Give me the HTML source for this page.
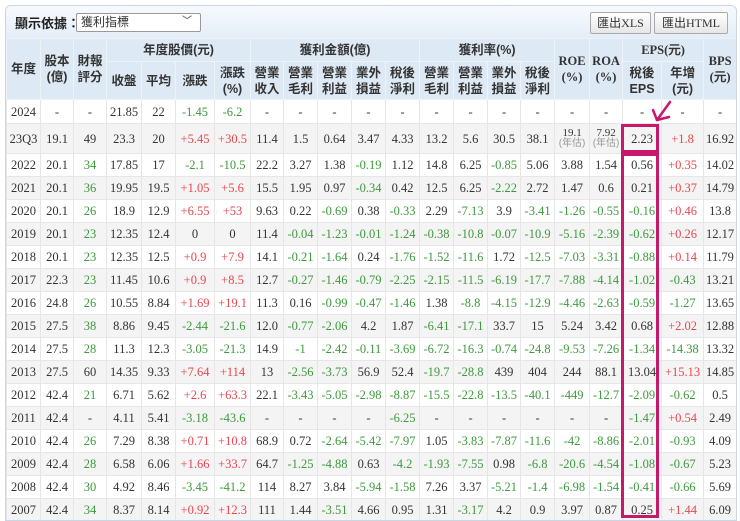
<!DOCTYPE html>
<html><head><meta charset="utf-8">
<style>
*{box-sizing:border-box;margin:0;padding:0}
body{width:740px;height:521px;background:#fff;overflow:hidden;position:relative;font-family:"Liberation Serif","Noto Serif CJK SC",serif;}
#wrap{position:absolute;left:5px;top:5px;width:732px;height:516px;border:1px solid #c9d6e3;border-radius:6px 6px 0 0;overflow:hidden}
#bar{position:absolute;left:0;top:0;width:730px;height:32px;background:linear-gradient(#f7fafd,#e4eef8);font-family:"Liberation Sans","Noto Sans CJK TC",sans-serif}
#lbl{position:absolute;left:9px;top:7px;font-size:13px;font-weight:bold;color:#222}
#sel{position:absolute;left:70px;top:7px;width:125px;height:19px;border:1px solid #999;background:#fff;border-radius:2px;font-size:12px;color:#333;padding-left:4px;line-height:17px}
#sel span{position:absolute;right:8px;top:-1px;font-size:10px}
.btn{position:absolute;top:6px;height:22px;border:1px solid #aaa;background:linear-gradient(#fff,#e6e6e6);border-radius:2px;font-size:12px;line-height:20px;text-align:center;color:#333;font-family:"Liberation Serif","Noto Sans CJK TC",serif}
table{position:absolute;left:0;top:32px;border-collapse:collapse;table-layout:fixed;width:731px}
th{background:#dde9f4;font-family:"Liberation Sans","Noto Sans CJK TC",sans-serif;font-size:12.5px;font-weight:bold;color:#333;border:1px solid #eef3f8;line-height:16px;text-align:center;padding:0}
th.e{font-family:"Liberation Serif",serif;font-weight:bold}
td{text-align:center;font-size:12.5px;line-height:12px;color:#333;border:1px solid #e6e6e6;height:23px;padding:0;white-space:nowrap;overflow:hidden}
tr{height:23px}
tr:nth-child(even) td{background:#f4f4f4}
tr.a td{background:#fff}
.g{color:#3c9a3c}.r{color:#e8464e}
.s{font-size:11px;line-height:10px}
.s i{font-style:normal;color:#999;font-size:10px;font-family:"Liberation Sans","Noto Sans CJK TC",sans-serif}
</style></head><body>
<div id="wrap">
<div id="bar"><div id="lbl">顯示依據：</div><div id="sel">獲利指標<span>﹀</span></div>
<div class="btn" style="left:584px;width:61px">匯出XLS</div><div class="btn" style="left:648px;width:74px">匯出HTML</div></div>
<table>
<colgroup><col style="width:34px"><col style="width:33px"><col style="width:33px"><col style="width:35px"><col style="width:34px"><col style="width:39px"><col style="width:36px"><col style="width:33px"><col style="width:34px"><col style="width:34px"><col style="width:34px"><col style="width:34px"><col style="width:34px"><col style="width:34px"><col style="width:33px"><col style="width:34px"><col style="width:35px"><col style="width:33px"><col style="width:39px"><col style="width:42px"><col style="width:33px"></colgroup>
<tr style="height:23px"><th rowspan="2">年度</th><th rowspan="2">股本<br>(億)</th><th rowspan="2">財報<br>評分</th><th colspan="4">年度股價(元)</th><th colspan="5">獲利金額(億)</th><th colspan="4">獲利率(%)</th><th rowspan="2" class="e">ROE<br>(%)</th><th rowspan="2" class="e">ROA<br>(%)</th><th colspan="2" class="e">EPS(元)</th><th rowspan="2" class="e">BPS<br>(元)</th></tr>
<tr style="height:38px"><th>收盤</th><th>平均</th><th>漲跌</th><th>漲跌<br>(%)</th><th>營業<br>收入</th><th>營業<br>毛利</th><th>營業<br>利益</th><th>業外<br>損益</th><th>稅後<br>淨利</th><th>營業<br>毛利</th><th>營業<br>利益</th><th>業外<br>損益</th><th>稅後<br>淨利</th><th>稅後<br>EPS</th><th>年增<br>(元)</th></tr>
<tr class="a" style="height:24px"><td style="height:24px">2024</td><td>-</td><td>-</td><td>21.85</td><td>22</td><td class="g">-1.45</td><td class="g">-6.2</td><td>-</td><td>-</td><td>-</td><td>-</td><td>-</td><td>-</td><td>-</td><td>-</td><td>-</td><td>-</td><td>-</td><td>-</td><td>-</td><td>-</td></tr>
<tr style="height:30px"><td style="height:30px">23Q3</td><td>19.1</td><td>49</td><td>23.3</td><td>20</td><td class="r">+5.45</td><td class="r">+30.5</td><td>11.4</td><td>1.5</td><td>0.64</td><td>3.47</td><td>4.33</td><td>13.2</td><td>5.6</td><td>30.5</td><td>38.1</td><td class="s">19.1<br><i>(年估)</i></td><td class="s">7.92<br><i>(年估)</i></td><td>2.23</td><td class="r">+1.8</td><td>16.92</td></tr>
<tr class="a"><td>2022</td><td>20.1</td><td class="g">34</td><td>17.85</td><td>17</td><td class="g">-2.1</td><td class="g">-10.5</td><td>22.2</td><td>3.27</td><td>1.38</td><td class="g">-0.19</td><td>1.12</td><td>14.8</td><td>6.25</td><td class="g">-0.85</td><td>5.06</td><td>3.88</td><td>1.54</td><td>0.56</td><td class="r">+0.35</td><td>14.02</td></tr>
<tr><td>2021</td><td>20.1</td><td class="g">36</td><td>19.95</td><td>19.5</td><td class="r">+1.05</td><td class="r">+5.6</td><td>15.5</td><td>1.95</td><td>0.97</td><td class="g">-0.34</td><td>0.42</td><td>12.5</td><td>6.25</td><td class="g">-2.22</td><td>2.72</td><td>1.47</td><td>0.6</td><td>0.21</td><td class="r">+0.37</td><td>14.79</td></tr>
<tr class="a"><td>2020</td><td>20.1</td><td class="g">26</td><td>18.9</td><td>12.9</td><td class="r">+6.55</td><td class="r">+53</td><td>9.63</td><td>0.22</td><td class="g">-0.69</td><td>0.38</td><td class="g">-0.33</td><td>2.29</td><td class="g">-7.13</td><td>3.9</td><td class="g">-3.41</td><td class="g">-1.26</td><td class="g">-0.55</td><td class="g">-0.16</td><td class="r">+0.46</td><td>13.8</td></tr>
<tr><td>2019</td><td>20.1</td><td class="g">23</td><td>12.35</td><td>12.4</td><td>0</td><td>0</td><td>11.4</td><td class="g">-0.04</td><td class="g">-1.23</td><td class="g">-0.01</td><td class="g">-1.24</td><td class="g">-0.38</td><td class="g">-10.8</td><td class="g">-0.07</td><td class="g">-10.9</td><td class="g">-5.16</td><td class="g">-2.39</td><td class="g">-0.62</td><td class="r">+0.26</td><td>12.17</td></tr>
<tr class="a"><td>2018</td><td>20.1</td><td class="g">23</td><td>12.35</td><td>12.5</td><td class="r">+0.9</td><td class="r">+7.9</td><td>14.1</td><td class="g">-0.21</td><td class="g">-1.64</td><td>0.24</td><td class="g">-1.76</td><td class="g">-1.52</td><td class="g">-11.6</td><td>1.72</td><td class="g">-12.5</td><td class="g">-7.03</td><td class="g">-3.31</td><td class="g">-0.88</td><td class="r">+0.14</td><td>11.79</td></tr>
<tr><td>2017</td><td>22.3</td><td class="g">23</td><td>11.45</td><td>10.6</td><td class="r">+0.9</td><td class="r">+8.5</td><td>12.7</td><td class="g">-0.27</td><td class="g">-1.46</td><td class="g">-0.79</td><td class="g">-2.25</td><td class="g">-2.15</td><td class="g">-11.5</td><td class="g">-6.19</td><td class="g">-17.7</td><td class="g">-7.88</td><td class="g">-4.14</td><td class="g">-1.02</td><td class="g">-0.43</td><td>13.21</td></tr>
<tr class="a"><td>2016</td><td>24.8</td><td class="g">26</td><td>10.55</td><td>8.84</td><td class="r">+1.69</td><td class="r">+19.1</td><td>11.3</td><td>0.16</td><td class="g">-0.99</td><td class="g">-0.47</td><td class="g">-1.46</td><td>1.38</td><td class="g">-8.8</td><td class="g">-4.15</td><td class="g">-12.9</td><td class="g">-4.46</td><td class="g">-2.63</td><td class="g">-0.59</td><td class="g">-1.27</td><td>13.65</td></tr>
<tr><td>2015</td><td>27.5</td><td class="g">38</td><td>8.86</td><td>9.45</td><td class="g">-2.44</td><td class="g">-21.6</td><td>12.0</td><td class="g">-0.77</td><td class="g">-2.06</td><td>4.2</td><td>1.87</td><td class="g">-6.41</td><td class="g">-17.1</td><td>33.7</td><td>15</td><td>5.24</td><td>3.42</td><td>0.68</td><td class="r">+2.02</td><td>12.88</td></tr>
<tr class="a"><td>2014</td><td>27.5</td><td class="g">28</td><td>11.3</td><td>12.3</td><td class="g">-3.05</td><td class="g">-21.3</td><td>14.9</td><td class="g">-1</td><td class="g">-2.42</td><td class="g">-0.11</td><td class="g">-3.69</td><td class="g">-6.72</td><td class="g">-16.3</td><td class="g">-0.74</td><td class="g">-24.8</td><td class="g">-9.53</td><td class="g">-7.26</td><td class="g">-1.34</td><td class="g">-14.38</td><td>13.32</td></tr>
<tr><td>2013</td><td>27.5</td><td>60</td><td>14.35</td><td>9.33</td><td class="r">+7.64</td><td class="r">+114</td><td>13</td><td class="g">-2.56</td><td class="g">-3.73</td><td>56.9</td><td>52.4</td><td class="g">-19.7</td><td class="g">-28.8</td><td>439</td><td>404</td><td>244</td><td>88.1</td><td>13.04</td><td class="r">+15.13</td><td>14.85</td></tr>
<tr class="a"><td>2012</td><td>42.4</td><td class="g">21</td><td>6.71</td><td>5.62</td><td class="r">+2.6</td><td class="r">+63.3</td><td>22.1</td><td class="g">-3.43</td><td class="g">-5.05</td><td class="g">-2.98</td><td class="g">-8.87</td><td class="g">-15.5</td><td class="g">-22.8</td><td class="g">-13.5</td><td class="g">-40.1</td><td class="g">-449</td><td class="g">-12.7</td><td class="g">-2.09</td><td class="g">-0.62</td><td>0.5</td></tr>
<tr><td>2011</td><td>42.4</td><td>-</td><td>4.11</td><td>5.41</td><td class="g">-3.18</td><td class="g">-43.6</td><td>-</td><td>-</td><td>-</td><td>-</td><td class="g">-6.25</td><td>-</td><td>-</td><td>-</td><td>-</td><td>-</td><td>-</td><td class="g">-1.47</td><td class="r">+0.54</td><td>2.49</td></tr>
<tr class="a"><td>2010</td><td>42.4</td><td class="g">26</td><td>7.29</td><td>8.38</td><td class="r">+0.71</td><td class="r">+10.8</td><td>68.9</td><td>0.72</td><td class="g">-2.64</td><td class="g">-5.42</td><td class="g">-7.97</td><td>1.05</td><td class="g">-3.83</td><td class="g">-7.87</td><td class="g">-11.6</td><td class="g">-42</td><td class="g">-8.86</td><td class="g">-2.01</td><td class="g">-0.93</td><td>4.09</td></tr>
<tr><td>2009</td><td>42.4</td><td class="g">28</td><td>6.58</td><td>6.06</td><td class="r">+1.66</td><td class="r">+33.7</td><td>64.7</td><td class="g">-1.25</td><td class="g">-4.88</td><td>0.63</td><td class="g">-4.2</td><td class="g">-1.93</td><td class="g">-7.55</td><td>0.98</td><td class="g">-6.8</td><td class="g">-20.6</td><td class="g">-4.54</td><td class="g">-1.08</td><td class="g">-0.67</td><td>5.23</td></tr>
<tr class="a"><td>2008</td><td>42.4</td><td class="g">30</td><td>4.92</td><td>8.46</td><td class="g">-3.45</td><td class="g">-41.2</td><td>114</td><td>8.27</td><td>3.84</td><td class="g">-5.94</td><td class="g">-1.58</td><td>7.26</td><td>3.37</td><td class="g">-5.21</td><td class="g">-1.4</td><td class="g">-6.98</td><td class="g">-1.54</td><td class="g">-0.41</td><td class="g">-0.66</td><td>5.69</td></tr>
<tr><td>2007</td><td>42.4</td><td class="g">34</td><td>8.37</td><td>8.14</td><td class="r">+0.92</td><td class="r">+12.3</td><td>111</td><td>1.44</td><td class="g">-3.51</td><td>4.66</td><td>0.95</td><td>1.31</td><td class="g">-3.17</td><td>4.2</td><td>0.9</td><td>3.97</td><td>0.87</td><td>0.25</td><td class="r">+1.44</td><td>6.09</td></tr>
</table>
</div>
<svg style="position:absolute;left:0;top:0" width="740" height="521">
<g fill="none" stroke="#c8186a" stroke-width="3">
<rect x="622.5" y="125.5" width="35" height="26"/>
<rect x="622.5" y="154.5" width="35" height="362"/>
</g>
<g fill="none" stroke="#c8186a" stroke-width="2.5" stroke-linecap="round" stroke-linejoin="round">
<path d="M670 102 L657 120"/><path d="M653 110 L657 120 L669 117"/>
</g>
</svg>
</body></html>
